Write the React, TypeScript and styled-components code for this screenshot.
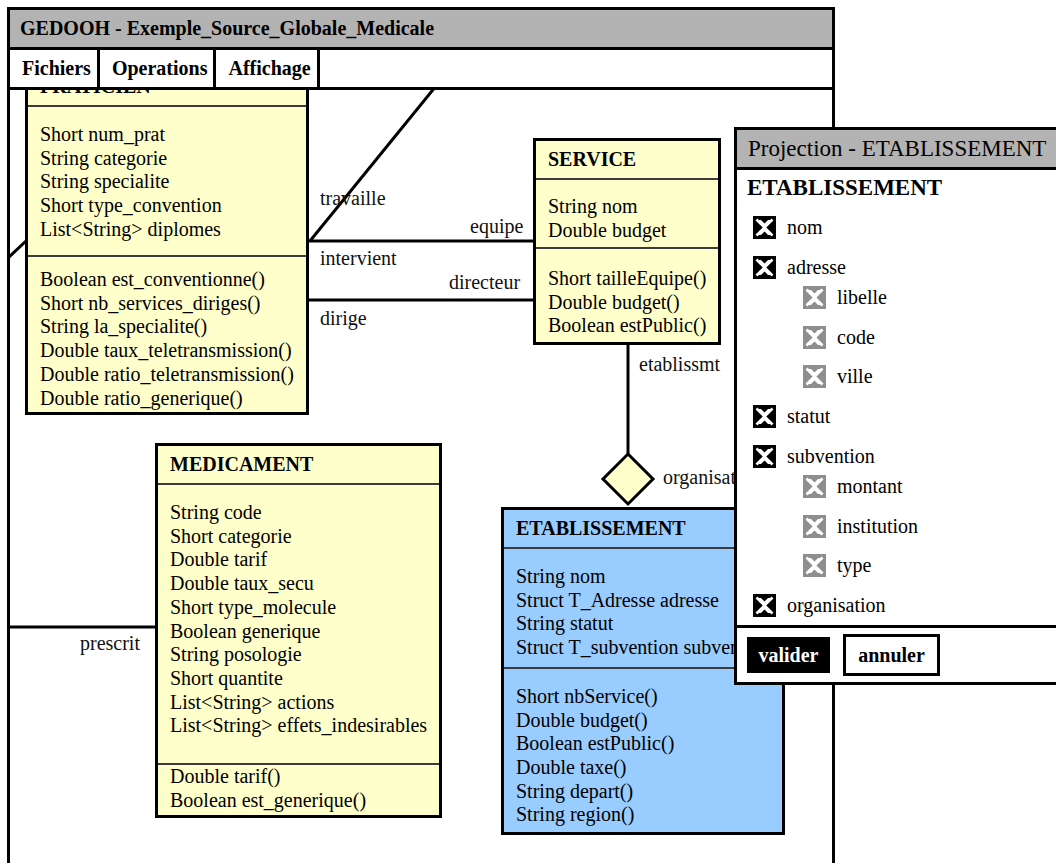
import React from "react";
import styled, { createGlobalStyle } from "styled-components";

const GlobalStyle = createGlobalStyle`
  html, body {
    margin: 0;
    padding: 0;
    background: #ffffff;
    overflow: hidden;
  }
  body {
    font-family: "Liberation Serif", "Times New Roman", serif;
    color: #000;
  }
`;

const Page = styled.div`
  position: relative;
  width: 1056px;
  height: 863px;
  overflow: hidden;
  box-sizing: border-box;
  padding: 7px 0 0 7px;
`;

const Window = styled.div`
  width: 828px;
  height: 920px;
  box-sizing: border-box;
  border: 3px solid #000;
  display: flex;
  flex-direction: column;
  background: #fff;
`;

const TitleBar = styled.div`
  height: 37px;
  flex: none;
  background: #b3b3b3;
  border-bottom: 3px solid #000;
  display: flex;
  align-items: center;
  padding-left: 10px;
  font-weight: bold;
  font-size: 20px;
`;

const MenuBar = styled.div`
  height: 37px;
  flex: none;
  border-bottom: 3px solid #000;
  display: flex;
`;

const MenuItem = styled.div`
  display: flex;
  align-items: center;
  padding: 0 6px 0 12px;
  border-right: 3px solid #000;
  font-weight: bold;
  font-size: 20px;
`;

const Canvas = styled.div`
  position: relative;
  flex: 1;
  overflow: hidden;
`;

const Wires = styled.svg`
  position: absolute;
  left: 0;
  top: 0;
  width: 100%;
  height: 100%;
  overflow: visible;
`;

const ClassBox = styled.div<{ $x: number; $y: number; $w: number; $bg: string }>`
  position: absolute;
  left: ${(p) => p.$x}px;
  top: ${(p) => p.$y}px;
  width: ${(p) => p.$w}px;
  box-sizing: border-box;
  border: 3px solid #000;
  background: ${(p) => p.$bg};
  font-size: 20px;
  white-space: nowrap;
  overflow: hidden;
`;

const ClassHeader = styled.div`
  height: 37px;
  display: flex;
  align-items: center;
  padding-left: 12px;
  font-weight: bold;
  border-bottom: 2px solid #3c3c3c;
`;

const Section = styled.div<{ $pt: number; $pb: number; $last?: boolean }>`
  padding: ${(p) => p.$pt}px 0 ${(p) => p.$pb}px 12px;
  line-height: 23.7px;
  border-bottom: ${(p) => (p.$last ? "none" : "2px solid #3c3c3c")};
`;

const Label = styled.span<{ $x: number; $y: number }>`
  position: absolute;
  left: ${(p) => p.$x}px;
  top: ${(p) => p.$y}px;
  font-size: 20px;
  line-height: 24px;
  white-space: nowrap;
  color: #111;
`;

const Panel = styled.div`
  position: absolute;
  left: 734px;
  top: 127px;
  width: 380px;
  box-sizing: border-box;
  border: 3px solid #000;
  background: #fff;
  display: flex;
  flex-direction: column;
`;

const PanelTitle = styled.div`
  height: 37px;
  background: #b3b3b3;
  border-bottom: 3px solid #000;
  display: flex;
  align-items: center;
  padding-left: 11px;
  font-size: 23px;
  white-space: nowrap;
`;

const PanelBody = styled.div`
  padding: 5px 0 0 10px;
`;

const PanelHeading = styled.div`
  font-size: 23px;
  font-weight: bold;
  line-height: 26px;
  margin-bottom: 7px;
`;

const Row = styled.div<{ $indent: number }>`
  height: 39.6px;
  display: flex;
  align-items: center;
  gap: 11px;
  padding-left: ${(p) => p.$indent}px;
  font-size: 20px;
`;

const Children = styled.div`
  margin-top: -9.2px;
`;

const Footer = styled.div`
  height: 54px;
  border-top: 3px solid #000;
  display: flex;
  align-items: center;
  gap: 13px;
  padding-left: 10px;
`;

const Button = styled.div<{ $primary?: boolean }>`
  box-sizing: border-box;
  display: flex;
  align-items: center;
  justify-content: center;
  font-weight: bold;
  font-size: 20px;
  height: ${(p) => (p.$primary ? 36 : 42)}px;
  width: ${(p) => (p.$primary ? 83 : 97)}px;
  background: ${(p) => (p.$primary ? "#000" : "#fff")};
  color: ${(p) => (p.$primary ? "#fff" : "#000")};
  border: ${(p) => (p.$primary ? "none" : "3px solid #000")};
`;

const CheckIcon: React.FC<{ tone: "dark" | "grey" }> = ({ tone }) => {
  const c = tone === "dark" ? "#000" : "#8e8e8e";
  return (
    <svg width="23" height="23" viewBox="0 0 23 23" style={{ flex: "none" }}>
      <rect x="0" y="0" width="23" height="23" fill={c} />
      <polygon points="4,4 19,4 11.5,11.5 19,19 4,19 11.5,11.5" fill="#fff" />
      <polygon points="8,4 15,4 11.5,7.5" fill={c} />
      <polygon points="8,19 15,19 11.5,15.5" fill={c} />
      <line x1="3.5" y1="3.5" x2="19.5" y2="19.5" stroke="#fff" strokeWidth="2.6" />
      <line x1="19.5" y1="3.5" x2="3.5" y2="19.5" stroke="#fff" strokeWidth="2.6" />
    </svg>
  );
};

type Box = {
  name: string;
  x: number;
  y: number;
  w: number;
  bg: string;
  attrs: string[];
  methods: string[];
  pad: [number, number, number, number];
};

const YELLOW = "#ffffcc";
const BLUE = "#99ccff";

const boxes: Box[] = [
  {
    name: "PRATICIEN",
    x: 15,
    y: -25,
    w: 284,
    bg: YELLOW,
    attrs: [
      "Short num_prat",
      "String categorie",
      "String specialite",
      "Short type_convention",
      "List<String> diplomes",
    ],
    methods: [
      "Boolean est_conventionne()",
      "Short nb_services_diriges()",
      "String la_specialite()",
      "Double taux_teletransmission()",
      "Double ratio_teletransmission()",
      "Double ratio_generique()",
    ],
    pad: [16, 13.5, 11, 2],
  },
  {
    name: "SERVICE",
    x: 523,
    y: 48,
    w: 188,
    bg: YELLOW,
    attrs: ["String nom", "Double budget"],
    methods: ["Short tailleEquipe()", "Double budget()", "Boolean estPublic()"],
    pad: [15, 5, 17.6, 4],
  },
  {
    name: "MEDICAMENT",
    x: 145,
    y: 353,
    w: 287,
    bg: YELLOW,
    attrs: [
      "String code",
      "Short categorie",
      "Double tarif",
      "Double taux_secu",
      "Short type_molecule",
      "Boolean generique",
      "String posologie",
      "Short quantite",
      "List<String> actions",
      "List<String> effets_indesirables",
    ],
    methods: ["Double tarif()", "Boolean est_generique()"],
    pad: [16, 25, 0, 3],
  },
  {
    name: "ETABLISSEMENT",
    x: 491,
    y: 417,
    w: 284,
    bg: BLUE,
    attrs: [
      "String nom",
      "Struct T_Adresse adresse",
      "String statut",
      "Struct T_subvention subvention",
    ],
    methods: [
      "Short nbService()",
      "Double budget()",
      "Boolean estPublic()",
      "Double taxe()",
      "String depart()",
      "String region()",
    ],
    pad: [16, 7, 16, 5],
  },
];

const labels: { text: string; x: number; y: number }[] = [
  { text: "travaille", x: 310, y: 96 },
  { text: "equipe", x: 460, y: 124 },
  { text: "intervient", x: 310, y: 156 },
  { text: "directeur", x: 439, y: 180 },
  { text: "dirige", x: 310, y: 216 },
  { text: "etablissmt", x: 629, y: 262 },
  { text: "organisation", x: 653, y: 375 },
  { text: "prescrit", x: 70, y: 541 },
];

type Field = { name: string; children?: string[] };
const fields: Field[] = [
  { name: "nom" },
  { name: "adresse", children: ["libelle", "code", "ville"] },
  { name: "statut" },
  { name: "subvention", children: ["montant", "institution", "type"] },
  { name: "organisation" },
];

export default function App() {
  return (
    <>
      <GlobalStyle />
      <Page>
        <Window>
          <TitleBar>GEDOOH - Exemple_Source_Globale_Medicale</TitleBar>
          <MenuBar>
            <MenuItem>Fichiers</MenuItem>
            <MenuItem>Operations</MenuItem>
            <MenuItem>Affichage</MenuItem>
          </MenuBar>
          <Canvas>
            <Wires>
              <g stroke="#000" strokeWidth="3" fill="none">
                <line x1="300" y1="151" x2="426" y2="-4" />
                <line x1="299" y1="151" x2="524" y2="151" />
                <line x1="299" y1="210" x2="524" y2="210" />
                <line x1="-2" y1="168" x2="16" y2="151" />
                <line x1="0" y1="537" x2="146" y2="537" />
                <line x1="618" y1="255" x2="618" y2="364" />
              </g>
              <polygon
                points="618,364 643,389 618,414 593,389"
                fill={YELLOW}
                stroke="#000"
                strokeWidth="3"
              />
            </Wires>
            {labels.map((l) => (
              <Label key={l.text} $x={l.x} $y={l.y}>
                {l.text}
              </Label>
            ))}
            {boxes.map((b) => (
              <ClassBox key={b.name} $x={b.x} $y={b.y} $w={b.w} $bg={b.bg}>
                <ClassHeader>{b.name}</ClassHeader>
                <Section $pt={b.pad[0]} $pb={b.pad[1]}>
                  {b.attrs.map((a) => (
                    <div key={a}>{a}</div>
                  ))}
                </Section>
                <Section $pt={b.pad[2]} $pb={b.pad[3]} $last>
                  {b.methods.map((m) => (
                    <div key={m}>{m}</div>
                  ))}
                </Section>
              </ClassBox>
            ))}
          </Canvas>
        </Window>
        <Panel>
          <PanelTitle>Projection - ETABLISSEMENT</PanelTitle>
          <PanelBody>
            <PanelHeading>ETABLISSEMENT</PanelHeading>
            {fields.map((f) => (
              <div key={f.name}>
                <Row $indent={6}>
                  <CheckIcon tone="dark" />
                  <span>{f.name}</span>
                </Row>
                {f.children && (
                  <Children>
                    {f.children.map((c) => (
                      <Row key={c} $indent={56}>
                        <CheckIcon tone="grey" />
                        <span>{c}</span>
                      </Row>
                    ))}
                  </Children>
                )}
              </div>
            ))}
          </PanelBody>
          <Footer>
            <Button $primary>valider</Button>
            <Button>annuler</Button>
          </Footer>
        </Panel>
      </Page>
    </>
  );
}
